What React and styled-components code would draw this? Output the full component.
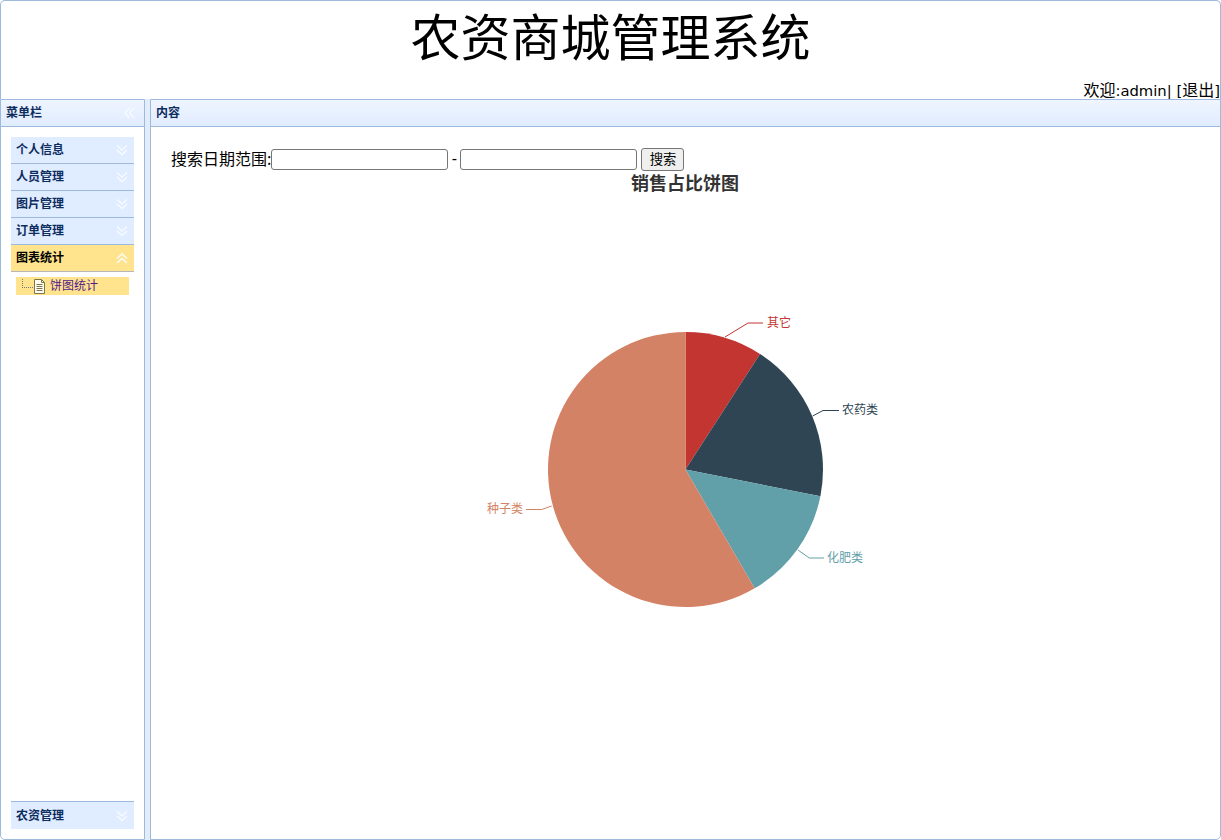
import styled, { createGlobalStyle } from 'styled-components'

const GlobalStyle = createGlobalStyle`
  html, body {
    margin: 0;
    padding: 0;
    height: 100%;
    overflow: hidden;
    background: white;
  }
  * { box-sizing: border-box; }
`

const Page = styled.div`
  display: flex;
  flex-direction: column;
  width: 1221px;
  height: 840px;
  font-family: "Noto Sans CJK SC", sans-serif;
  color: #000;
`

const TopPanel = styled.header`
  height: 99px;
  display: flex;
  flex-direction: column;
  border: 1px solid #9db9dc;
  border-bottom: none;
  border-radius: 5px 5px 0 0;
`

const SiteTitle = styled.h1`
  margin: 0;
  height: 81px;
  font-size: 50px;
  line-height: 67px;
  font-weight: normal;
  text-align: center;
`

const Welcome = styled.div`
  font-family: "DejaVu Sans", "Noto Sans CJK SC", sans-serif;
  font-size: 14.8px;
  line-height: 17px;
  text-align: right;
  white-space: pre;
`

const WelcomeCjk = styled.span`
  font-family: "Noto Sans CJK SC", sans-serif;
  font-size: 16px;
`

const Body = styled.div`
  flex: 1;
  display: flex;
  min-height: 0;
`

const Panel = styled.section`
  display: flex;
  flex-direction: column;
  width: ${props => props.$width};
  flex: ${props => props.$grow ? 1 : 'none'};
  border: 1px solid #9db9dc;
  border-radius: 0 0 ${props => props.$grow ? '5px' : '0'} ${props => props.$grow ? '0' : '5px'};
`

const Splitter = styled.div`
  width: 5px;
  background: #e3ecfa;
`

const PanelHeader = styled.div`
  height: 27px;
  flex: none;
  display: flex;
  align-items: center;
  justify-content: space-between;
  padding: 0 9px 0 5px;
  background: linear-gradient(to bottom, #eff5ff, #e0ecff);
  border-bottom: 1px solid #9db9dc;
  font-size: 12px;
  font-weight: bold;
  color: #0e2d5f;
`

const Sidebar = styled.div`
  flex: 1;
  display: flex;
  flex-direction: column;
  padding: 10px 10px 10px;
`

const AccordionHeader = styled.div`
  height: ${props => props.$height || 27}px;
  flex: none;
  display: flex;
  align-items: center;
  justify-content: space-between;
  padding: 0 6px 0 5px;
  font-size: 12px;
  font-weight: bold;
  color: ${props => props.$active ? '#000' : '#0e2d5f'};
  background: ${props => props.$active ? '#ffe48d' : '#e0ecff'};
  border-top: ${props => props.$topBorder ? `1px solid ${props.$active ? '#b7b7b7' : '#9db9dc'}` : 'none'};
  border-bottom: ${props => props.$bottomBorder ? `1px solid ${props.$active ? '#b7b7b7' : '#9db9dc'}` : 'none'};
`

// Noto 的字身偏下,文字往上提一点
const Label = styled.span`
  margin-bottom: ${props => props.$lift || 3}px;
`

const TreeRow = styled.div`
  display: flex;
  align-items: center;
  height: 18px;
  margin: 5px 5px 0;
  padding-left: 6px;
  background: #ffe48d;
  font-size: 12px;
  color: #551a8b;
`

const Spacer = styled.div`
  flex: 1;
`

const TreeLine = styled.span`
  width: 11px;
  height: 9px;
  margin-bottom: 6px;
  border-left: 1px dotted #777;
  border-bottom: 1px dotted #777;
`

const Content = styled.div`
  flex: 1;
  display: flex;
  flex-direction: column;
  align-items: center;
  min-height: 0;
`

const SearchBar = styled.form`
  align-self: stretch;
  display: flex;
  align-items: center;
  height: 24px;
  margin-top: 20px;
  padding-left: 20px;
  font-size: 16px;
`

const DateInput = styled.input`
  width: 177px;
  height: 21px;
  padding: 1px 2px;
  border: 1px solid #767676;
  border-radius: 3px;
  background: white;
`

const Dash = styled.span`
  width: 12px;
  text-align: center;
  font-family: "Liberation Sans", sans-serif;
`

const SearchButton = styled.button`
  width: 43px;
  height: 23px;
  margin-left: 4px;
  padding: 0 0 3px;
  border: 1px solid #767676;
  border-radius: 3px;
  background: #efefef;
  font-family: "Noto Sans CJK SC", sans-serif;
  font-size: 13.33px;
  color: #000;
`

const ChartSvg = styled.svg`
  display: block;
  flex: none;
  margin-top: -3px;
`

function Chevrons({ up }) {
  const a = up ? 'M1 6.5 L6 2 L11 6.5' : 'M1 1.5 L6 6 L11 1.5'
  const b = up ? 'M1 11 L6 6.5 L11 11' : 'M1 6 L6 10.5 L11 6'
  return (
    <svg width="12" height="12" viewBox="0 0 12 12" fill="none" stroke="#f7fbff" strokeWidth="1.4">
      <path d={a} />
      <path d={b} />
    </svg>
  )
}

function CollapseIcon() {
  return (
    <svg width="12" height="12" viewBox="0 0 12 12" fill="none" stroke="#f7fbff" strokeWidth="1.4">
      <path d="M6.5 1 L2 6 L6.5 11" />
      <path d="M11 1 L6.5 6 L11 11" />
    </svg>
  )
}

function FileIcon() {
  return (
    <svg width="13" height="15" viewBox="0 0 13 15" style={{ margin: '0 4px 0 0' }}>
      <path d="M1.5 0.5 H8.5 L11.5 3.5 V14.5 H1.5 Z" fill="#fffdf0" stroke="#7a7650" />
      <path d="M8.5 0.5 V3.5 H11.5" fill="none" stroke="#7a7650" />
      <path d="M3.5 5.5 H9.5 M3.5 7.5 H9.5 M3.5 9.5 H9.5 M3.5 11.5 H9.5" stroke="#7a7650" />
    </svg>
  )
}

const menus = ['个人信息', '人员管理', '图片管理', '订单管理']

// 饼图: 圆心和半径按 1069x600 的图表区算
const cx = 534.5
const cy = 301.5
const r = 137.5
const slices = [
  { name: '其它', color: '#c23531', from: 0, to: 32.8 },
  { name: '农药类', color: '#2f4554', from: 32.8, to: 101.2 },
  { name: '化肥类', color: '#61a0a8', from: 101.2, to: 149.8 },
  { name: '种子类', color: '#d48265', from: 149.8, to: 360 },
]

const labels = [
  { name: '其它', color: '#c23531', line: '574,169 597,155 612,155', x: 616, y: 158.5, anchor: 'start' },
  { name: '农药类', color: '#2f4554', line: '661.7,248 672,242.5 688,242.5', x: 691, y: 245.7, anchor: 'start' },
  { name: '化肥类', color: '#61a0a8', line: '647,382 658.3,390 673,390', x: 676, y: 393.5, anchor: 'start' },
  { name: '种子类', color: '#d48265', line: '400.7,338 390.7,341.5 375,341.5', x: 372, y: 344.5, anchor: 'end' },
]

function point(angle) {
  const rad = (angle * Math.PI) / 180
  return [cx + r * Math.sin(rad), cy - r * Math.cos(rad)]
}

function slicePath(from, to) {
  const [x1, y1] = point(from)
  const [x2, y2] = point(to)
  const large = to - from > 180 ? 1 : 0
  return `M${cx} ${cy} L${x1} ${y1} A${r} ${r} 0 ${large} 1 ${x2} ${y2} Z`
}

function PieChart() {
  return (
    <ChartSvg width="1069" height="600" viewBox="0 0 1069 600">
      <text x="534" y="22" textAnchor="middle" fontSize="18" fontWeight="bold" fill="#333" fontFamily='"Noto Sans CJK SC", sans-serif'>
        销售占比饼图
      </text>
      {slices.map(s => (
        <path key={s.name} d={slicePath(s.from, s.to)} fill={s.color} />
      ))}
      {labels.map(l => (
        <g key={l.name}>
          <polyline points={l.line} fill="none" stroke={l.color} strokeWidth="1" />
          <text x={l.x} y={l.y} textAnchor={l.anchor} fontSize="12" fill={l.color} fontFamily='"Noto Sans CJK SC", sans-serif'>
            {l.name}
          </text>
        </g>
      ))}
    </ChartSvg>
  )
}

export default function App() {
  return (
    <Page>
      <GlobalStyle />
      <TopPanel>
        <SiteTitle>农资商城管理系统</SiteTitle>
        <Welcome><WelcomeCjk>欢迎</WelcomeCjk>:admin| [<WelcomeCjk>退出</WelcomeCjk>]</Welcome>
      </TopPanel>
      <Body>
        <Panel $width="145px">
          <PanelHeader>
            <Label>菜单栏</Label>
            <CollapseIcon />
          </PanelHeader>
          <Sidebar>
            {menus.map(name => (
              <AccordionHeader key={name} $bottomBorder>
                <Label>{name}</Label>
                <Chevrons />
              </AccordionHeader>
            ))}
            <AccordionHeader $active $bottomBorder>
              <Label>图表统计</Label>
              <Chevrons up />
            </AccordionHeader>
            <TreeRow>
              <TreeLine />
              <FileIcon />
              <Label>饼图统计</Label>
            </TreeRow>
            <Spacer />
            <AccordionHeader $topBorder $height={28}>
              <Label>农资管理</Label>
              <Chevrons />
            </AccordionHeader>
          </Sidebar>
        </Panel>
        <Splitter />
        <Panel $grow>
          <PanelHeader><Label>内容</Label></PanelHeader>
          <Content>
            <SearchBar>
              <Label $lift={2}>搜索日期范围:</Label>
              <DateInput />
              <Dash>-</Dash>
              <DateInput />
              <SearchButton type="button">搜索</SearchButton>
            </SearchBar>
            <PieChart />
          </Content>
        </Panel>
      </Body>
    </Page>
  )
}
